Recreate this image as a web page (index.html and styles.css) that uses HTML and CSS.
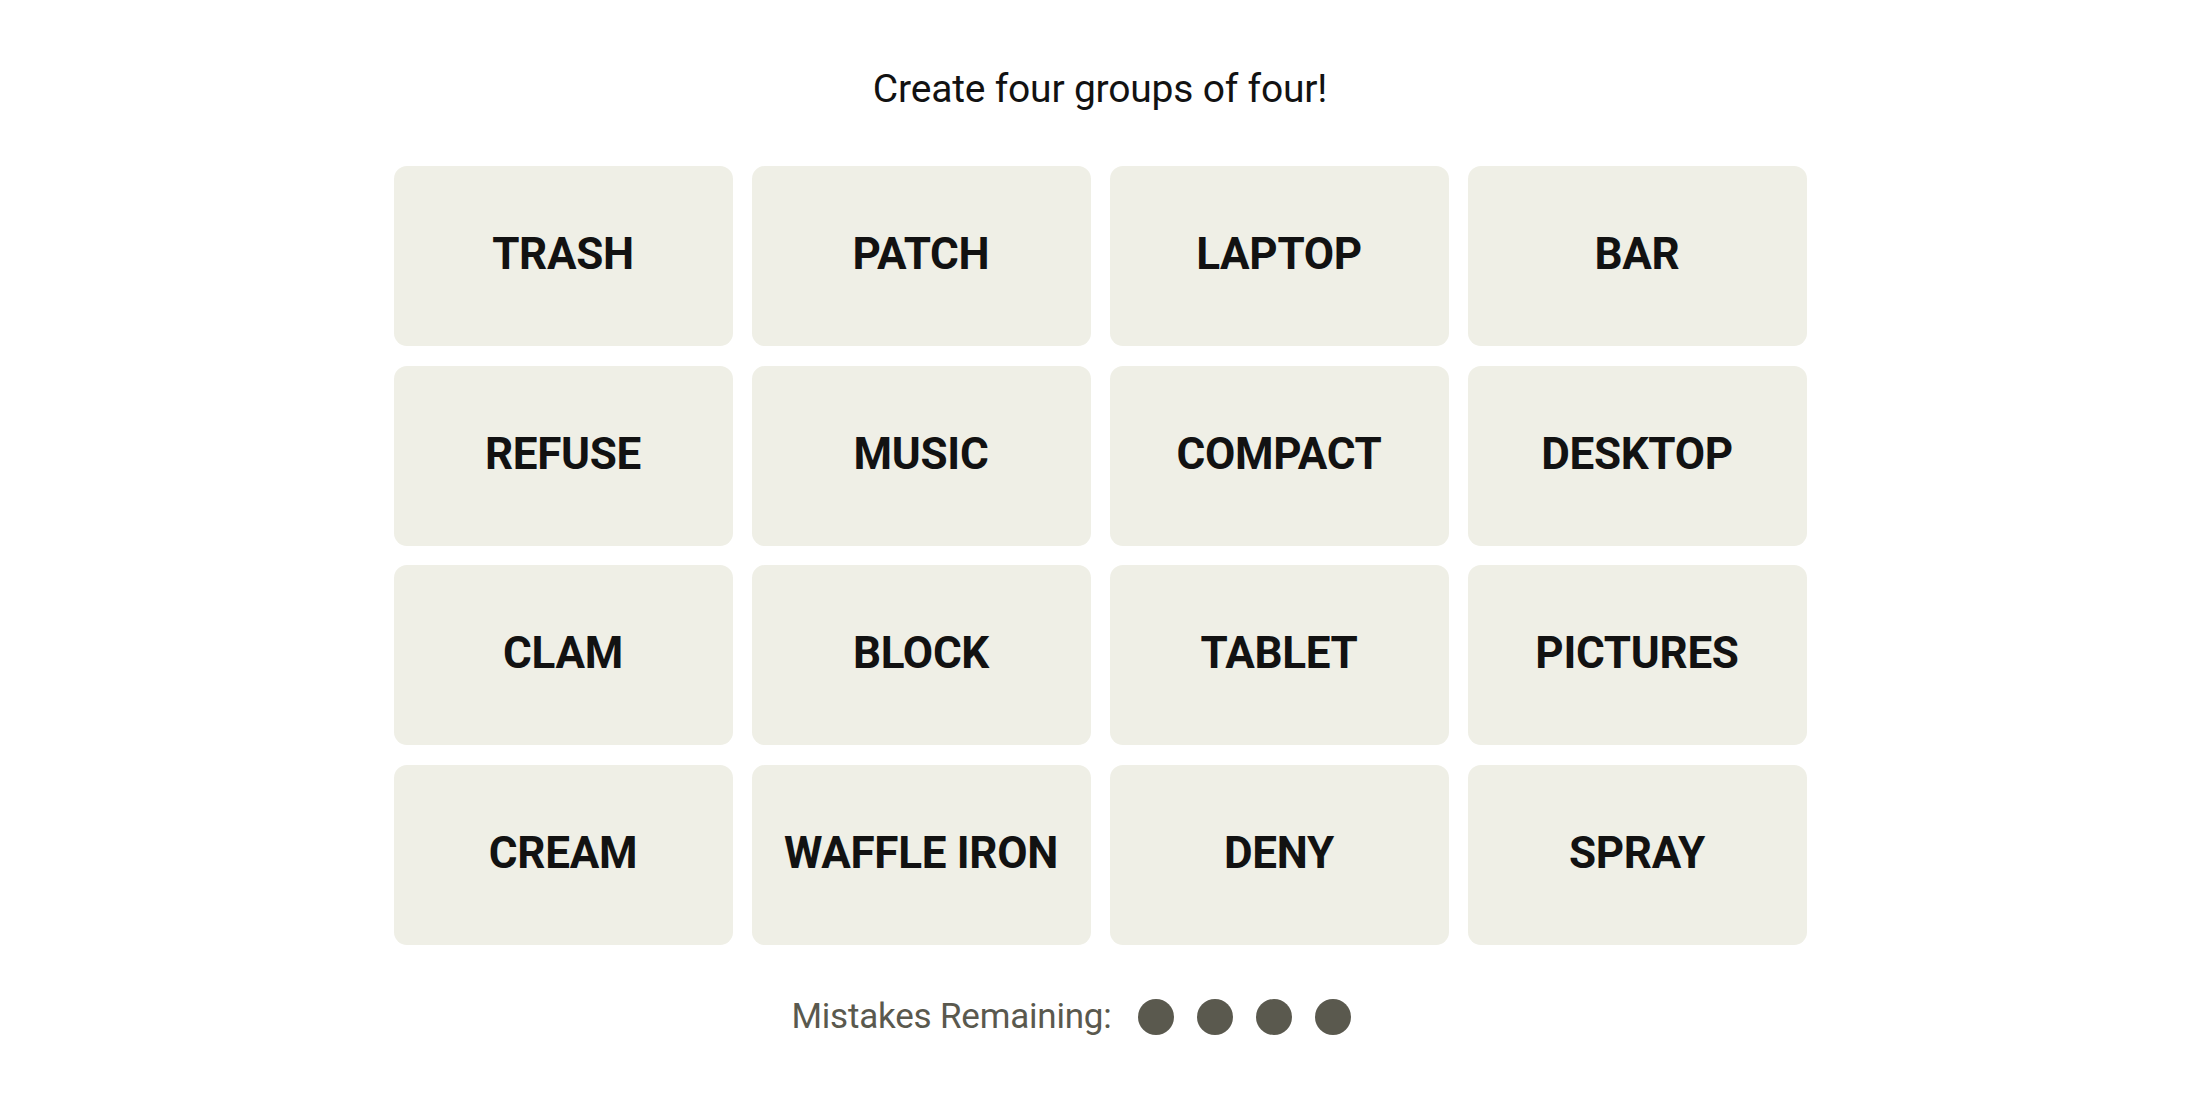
FILE: index.html
```html
<!DOCTYPE html>
<html lang="en">
<head>
<meta charset="utf-8">
<title>Connections</title>
<link rel="stylesheet" href="styles.css">
</head>
<body>
<main class="game">
  <p class="prompt">Create four groups of four!</p>
  <div class="board">
    <button class="tile">TRASH</button>
    <button class="tile">PATCH</button>
    <button class="tile">LAPTOP</button>
    <button class="tile">BAR</button>
    <button class="tile">REFUSE</button>
    <button class="tile">MUSIC</button>
    <button class="tile">COMPACT</button>
    <button class="tile">DESKTOP</button>
    <button class="tile">CLAM</button>
    <button class="tile">BLOCK</button>
    <button class="tile">TABLET</button>
    <button class="tile">PICTURES</button>
    <button class="tile">CREAM</button>
    <button class="tile">WAFFLE IRON</button>
    <button class="tile">DENY</button>
    <button class="tile">SPRAY</button>
  </div>
  <div class="mistakes">
    <span class="mistakes-label">Mistakes Remaining:</span>
    <span class="bubbles">
      <span class="bubble"></span>
      <span class="bubble"></span>
      <span class="bubble"></span>
      <span class="bubble"></span>
    </span>
  </div>
</main>
</body>
</html>
```
FILE: styles.css
```css
html, body {
  margin: 0;
  padding: 0;
  background: #ffffff;
}

body {
  font-family: Roboto, "Liberation Sans", Arial, sans-serif;
  color: #000000;
}

.game {
  display: flex;
  flex-direction: column;
  align-items: center;
  padding-top: 66px;
}

.prompt {
  margin: 0;
  font-size: 39px;
  line-height: 46px;
  font-weight: 400;
  color: #121212;
  letter-spacing: -0.2px;
}

.board {
  margin-top: 54px;
  display: grid;
  grid-template-columns: repeat(4, 339px);
  grid-auto-rows: 180px;
  gap: 19.5px 19px;
}

.tile {
  border: none;
  margin: 0;
  padding: 0 0 4px 0;
  background: #efefe6;
  border-radius: 13px;
  font-family: Roboto, "Liberation Sans", Arial, sans-serif;
  font-weight: 700;
  font-size: 44px;
  color: #121212;
  display: flex;
  align-items: center;
  justify-content: center;
  letter-spacing: -0.3px;
}

.mistakes {
  margin-top: 52px;
  display: flex;
  align-items: center;
  gap: 26px;
  padding-right: 58px;
}

.mistakes-label {
  font-size: 35px;
  line-height: 40px;
  font-weight: 400;
  color: #5a594e;
  letter-spacing: -0.2px;
}

.bubbles {
  display: flex;
  gap: 23px;
}

.bubble {
  width: 36px;
  height: 36px;
  border-radius: 50%;
  background: #5a594e;
}
```
